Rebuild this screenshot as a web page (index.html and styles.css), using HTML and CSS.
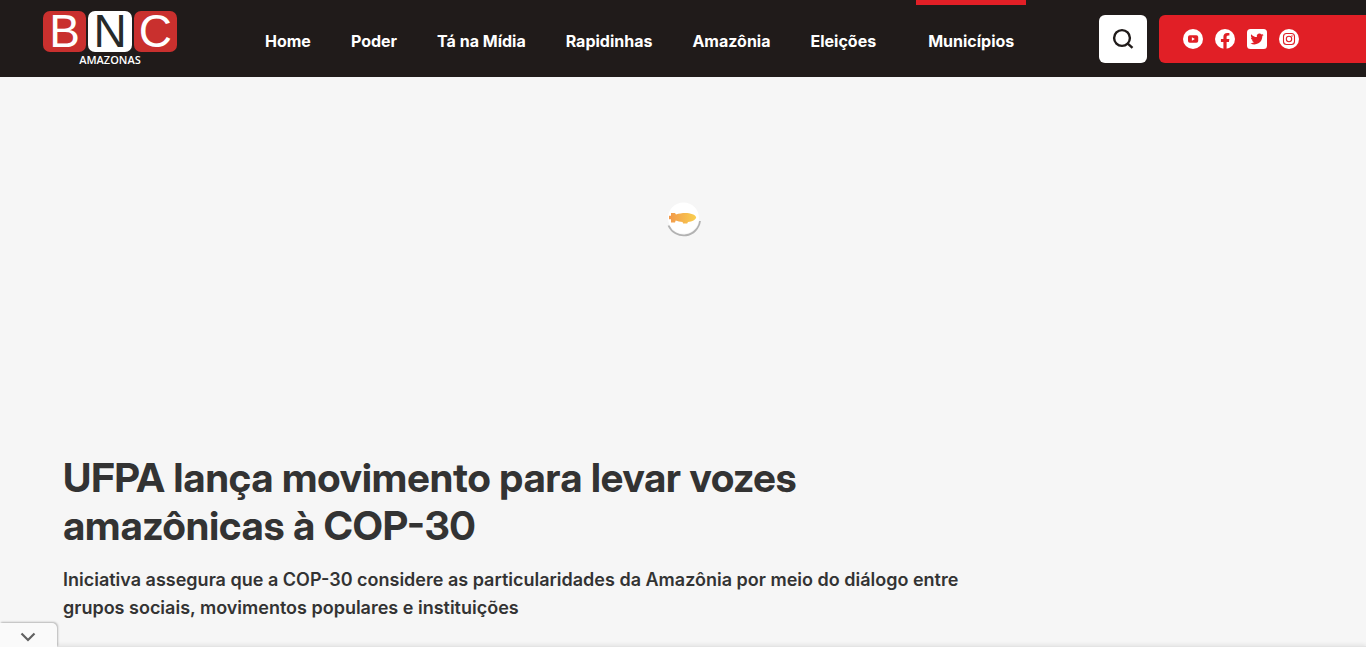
FILE: index.html
```html
<!DOCTYPE html>
<html lang="pt-BR">
<head>
    <meta charset="UTF-8">
    <meta name="viewport" content="width=device-width, initial-scale=1.0">
    <title>UFPA lança movimento para levar vozes amazônicas à COP-30 - BNC Amazonas</title>
    <link rel="stylesheet" href="styles.css">
</head>
<body>
    <header class="site-header">
        <a class="logo" href="#" aria-label="BNC Amazonas">
            <span class="logo-tiles">
                <span class="tile">B</span>
                <span class="tile tile-white">N</span>
                <span class="tile">C</span>
            </span>
            <span class="logo-name">AMAZONAS</span>
        </a>

        <nav class="main-nav">
            <a href="#">Home</a>
            <a href="#">Poder</a>
            <a href="#">Tá na Mídia</a>
            <a href="#">Rapidinhas</a>
            <a href="#">Amazônia</a>
            <a href="#">Eleições</a>
            <a class="featured" href="#">Municípios</a>
        </nav>

        <button class="search-btn" type="button" aria-label="Buscar">
            <svg width="24" height="24" viewBox="0 0 24 24" fill="none" stroke="#201b1a" stroke-width="2.4">
                <circle cx="11" cy="11" r="7.9"/>
                <path d="M16.5 16.4L21.5 20.8"/>
            </svg>
        </button>

        <div class="social">
            <a href="#" aria-label="YouTube">
                <svg width="20" height="20" viewBox="0 0 20 20">
                    <circle cx="10" cy="10" r="10" fill="#fff"/>
                    <rect x="5" y="6.3" width="10.2" height="7.4" rx="1.8" fill="#e11f26"/>
                    <path d="M8.9 8.3v3.4l3-1.7z" fill="#fff"/>
                </svg>
            </a>
            <a href="#" aria-label="Facebook">
                <svg width="20" height="20" viewBox="0 0 20 20">
                    <circle cx="10" cy="10" r="10" fill="#fff"/>
                    <path d="M8.4 20v-7.1H5.9V10h2.5V7.8c0-2.5 1.5-3.9 3.8-3.9 1.1 0 2.2.2 2.2.2v2.5h-1.2c-1.2 0-1.6.8-1.6 1.6V10h2.8l-.5 2.9h-2.3V20z" fill="#e11f26"/>
                </svg>
            </a>
            <a href="#" aria-label="Twitter">
                <svg width="20" height="20" viewBox="0 0 20 20">
                    <rect width="20" height="20" rx="3.5" fill="#fff"/>
                    <path d="M16.6 6c-.5.2-1 .4-1.5.4.6-.3 1-.8 1.2-1.4-.5.3-1.1.5-1.7.6a2.7 2.7 0 0 0-4.7 2.5C7.6 8 5.6 6.9 4.3 5.2c-.8 1.3-.3 2.8.8 3.6-.4 0-.8-.1-1.2-.3 0 1.3.9 2.4 2.2 2.7-.4.1-.8.1-1.2 0 .3 1.1 1.3 1.9 2.5 1.9-1.1.9-2.5 1.3-4 1.1a7.8 7.8 0 0 0 11.9-6.9c.5-.4 1-.8 1.3-1.3z" fill="#e11f26"/>
                </svg>
            </a>
            <a href="#" aria-label="Instagram">
                <svg width="20" height="20" viewBox="0 0 20 20" fill="none" stroke="#e11f26" stroke-width="1.1">
                    <circle cx="10" cy="10" r="10" fill="#fff" stroke="none"/>
                    <rect x="4.5" y="4.5" width="11" height="11" rx="3"/>
                    <circle cx="10" cy="10" r="2.7"/>
                    <circle cx="13" cy="7" r=".7" fill="#e11f26" stroke="none"/>
                </svg>
            </a>
        </div>
    </header>

    <main>
        <div class="ad-slot">
            <svg width="36" height="36" viewBox="0 0 36 36" role="img" aria-label="Carregando">
                <defs>
                    <linearGradient id="zeppelin">
                        <stop offset="0" stop-color="#f2994a"/>
                        <stop offset="1" stop-color="#f9cf50"/>
                    </linearGradient>
                </defs>
                <circle cx="18.5" cy="17" r="15.5" fill="#fff"/>
                <path d="M6 12h4l1 1.5C15 12.2 20 11.700 24 12.300c4 .6 6.800 2.200 7.200 4.200-.5 2.300-4 4-8.200 4.500l-.8 1.500h-4L17.500 21c-2.500-.1-4.700-.6-6.800-1.400L10 21.500H6v-3.200H4v-3.500h2z" fill="url(#zeppelin)"/>
                <path d="M3.5 24.500A16.500 16.500 0 0 0 35 20" fill="none" stroke="#b2b2b2" stroke-width="1.8"/>
            </svg>
        </div>

        <article class="post">
            <h1>UFPA lança movimento para levar vozes amazônicas à COP-30</h1>
            <p class="excerpt">Iniciativa assegura que a COP-30 considere as particularidades da Amazônia por meio do diálogo entre grupos sociais, movimentos populares e instituições</p>
        </article>
    </main>

    <div class="anchor-ad">
        <button class="anchor-toggle" type="button" aria-label="Fechar anúncio">
            <svg width="16" height="10" viewBox="0 0 16 10" fill="none" stroke="#616161" stroke-width="2.2">
                <path d="M1.5 1.5L8 8l6.5-6.5"/>
            </svg>
        </button>
    </div>
</body>
</html>
```
FILE: styles.css
```css
* {
    margin: 0;
    padding: 0;
    box-sizing: border-box;
}

body {
    background-color: #f6f6f6;
    color: #333;
    font-family: 'Inter', sans-serif;
    min-height: 100vh;
    overflow-x: hidden;
}

a {
    color: inherit;
    text-decoration: none;
}

button {
    border: 0;
    cursor: pointer;
}

svg {
    display: block;
}

/* Header */
.site-header {
    display: flex;
    height: 77px;
    padding-left: 43px;
    background-color: #201b1a;
    color: #fff;
}

.logo {
    display: flex;
    flex-direction: column;
    align-items: center;
    width: 134px;
    padding-top: 11px;
}

.logo-tiles {
    display: flex;
    gap: 2px;
    width: 100%;
}

.tile {
    flex: 1;
    height: 41px;
    border-radius: 7px;
    background-color: #c9302e;
    font-family: 'Liberation Sans', Arial, sans-serif;
    font-size: 46px;
    line-height: 41px;
    text-align: center;
}

.tile-white {
    background-color: #fff;
    color: #262a2a;
}

.logo-name {
    font-family: 'Open Sans', sans-serif;
    font-size: 11px;
    font-weight: 600;
    line-height: 16px;
}

.main-nav {
    display: flex;
    flex: 1;
    gap: 40px;
    margin-left: 88px;
    font-size: 16px;
    font-weight: 700;
    line-height: 20px;
    white-space: nowrap;
}

.main-nav a {
    padding-top: 31px;
}

.main-nav .featured {
    height: 100%;
    padding: 26px 12px 0;
    border-top: 5px solid #e11f26;
}

.search-btn {
    display: flex;
    align-items: center;
    justify-content: center;
    width: 48px;
    height: 48px;
    margin: 15px 12px 0 0;
    border-radius: 6px;
    background-color: #fff;
}

.social {
    display: flex;
    align-items: center;
    gap: 12px;
    width: 207px;
    height: 48px;
    margin-top: 15px;
    padding-left: 24px;
    border-radius: 6px 0 0 6px;
    background-color: #e11f26;
}

/* Content */
.ad-slot {
    display: flex;
    align-items: center;
    justify-content: center;
    height: 284px;
}

.post {
    max-width: 1240px;
    margin: 0 auto;
    padding: 93px 300px 40px 0;
}

.post h1 {
    max-width: 800px;
    font-family: 'Inter Display', 'Inter', sans-serif;
    font-size: 40px;
    font-weight: 700;
    line-height: 48px;
}

.excerpt {
    margin-top: 16px;
    font-size: 18px;
    font-weight: 600;
    line-height: 28px;
}

/* Bottom ad */
.anchor-ad {
    position: fixed;
    bottom: 0;
    left: 0;
    width: 100%;
    height: 1px;
    background-color: #e4e4e4;
    box-shadow: 0 0 4px rgba(0, 0, 0, 0.3);
}

.anchor-toggle {
    position: absolute;
    bottom: 0;
    left: 0;
    display: flex;
    align-items: center;
    justify-content: center;
    width: 57px;
    height: 24px;
    padding: 4px 2px 0 0;
    border-radius: 0 5px 0 0;
    background-color: #fafafa;
    box-shadow: 1px -1px 2px rgba(0, 0, 0, 0.25);
}
```
